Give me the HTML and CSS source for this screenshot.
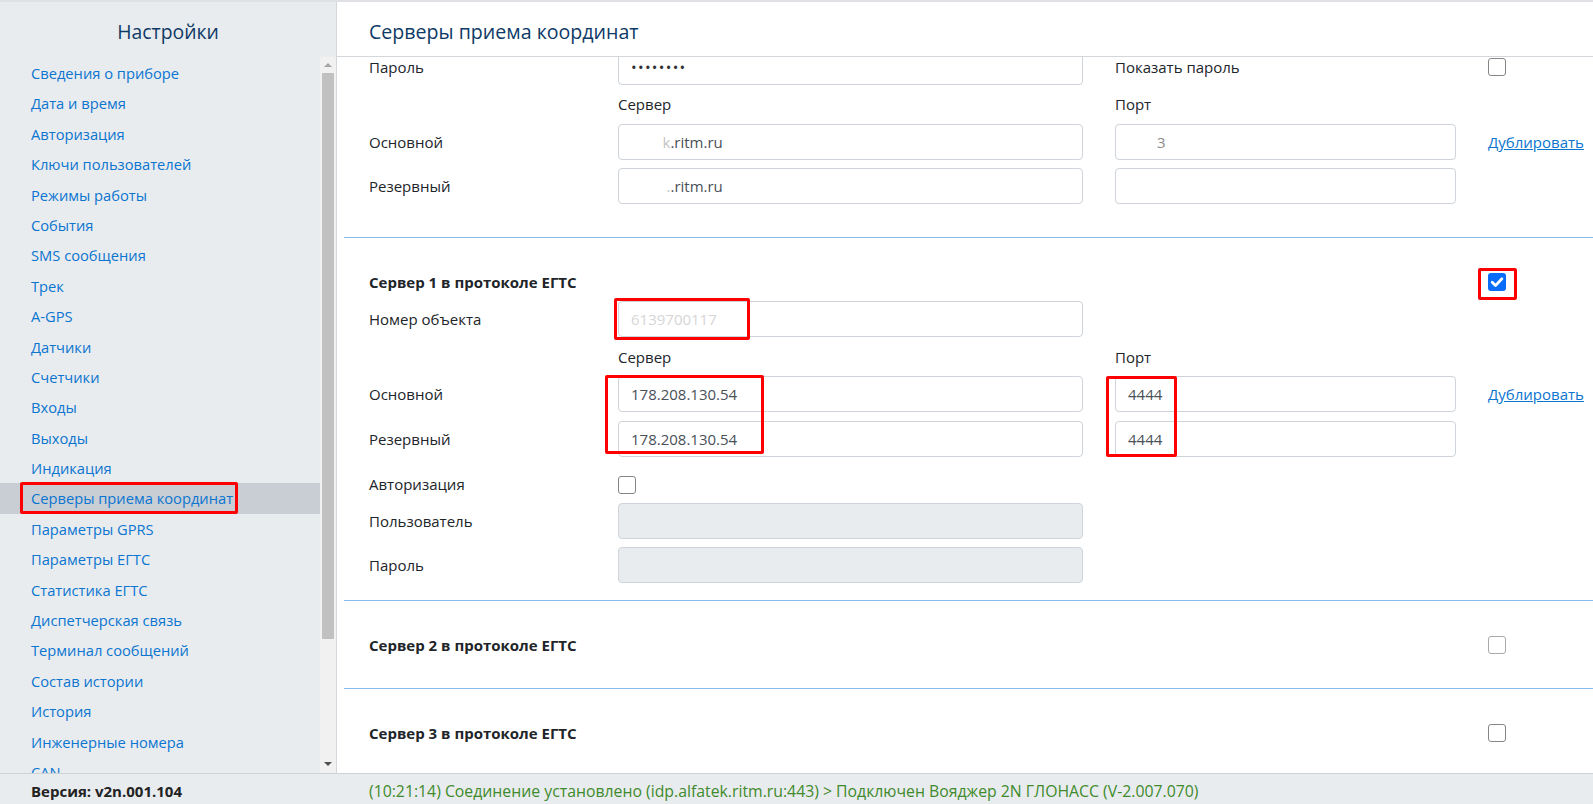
FILE: index.html
```html
<!DOCTYPE html>
<html lang="ru">
<head>
<meta charset="utf-8">
<title>Серверы приема координат</title>
<link rel="stylesheet" href="styles.css">
</head>
<body>
<div class="app">
  <div class="side-title">Настройки</div>
  <div class="main-title">Серверы приема координат</div>

  <div class="side-body">
    <ul class="nav">
      <li><a href="#">Сведения о приборе</a></li>
      <li><a href="#">Дата и время</a></li>
      <li><a href="#">Авторизация</a></li>
      <li><a href="#">Ключи пользователей</a></li>
      <li><a href="#">Режимы работы</a></li>
      <li><a href="#">События</a></li>
      <li><a href="#">SMS сообщения</a></li>
      <li><a href="#">Трек</a></li>
      <li><a href="#">A-GPS</a></li>
      <li><a href="#">Датчики</a></li>
      <li><a href="#">Счетчики</a></li>
      <li><a href="#">Входы</a></li>
      <li><a href="#">Выходы</a></li>
      <li><a href="#">Индикация</a></li>
      <li class="active"><a href="#">Серверы приема координат</a><span class="mark mark-nav"></span></li>
      <li><a href="#">Параметры GPRS</a></li>
      <li><a href="#">Параметры ЕГТС</a></li>
      <li><a href="#">Статистика ЕГТС</a></li>
      <li><a href="#">Диспетчерская связь</a></li>
      <li><a href="#">Терминал сообщений</a></li>
      <li><a href="#">Состав истории</a></li>
      <li><a href="#">История</a></li>
      <li><a href="#">Инженерные номера</a></li>
      <li><a href="#">CAN</a></li>
    </ul>
    <div class="scrollbar">
      <span class="sb-arrow sb-up"></span>
      <div class="sb-track"><div class="sb-thumb"></div></div>
      <span class="sb-arrow sb-down"></span>
    </div>
  </div>

  <div class="content">
    <div class="content-inner">
      <section class="sect sect-first">
        <div class="row">
          <div class="lbl">Пароль</div>
          <div class="inp pass">••••••••</div>
          <div class="lbl">Показать пароль</div>
          <div><span class="cb"></span></div>
        </div>
        <div class="row row-cap">
          <div></div>
          <div class="lbl">Сервер</div>
          <div class="lbl">Порт</div>
          <div></div>
        </div>
        <div class="row">
          <div class="lbl">Основной</div>
          <div class="inp masked-a"><span class="faint">k</span>.ritm.ru</div>
          <div class="inp masked-p"><span class="half">3</span></div>
          <div><a class="link" href="#">Дублировать</a></div>
        </div>
        <div class="row">
          <div class="lbl">Резервный</div>
          <div class="inp masked-b"><span class="faint">.</span>.ritm.ru</div>
          <div class="inp"></div>
          <div></div>
        </div>
      </section>

      <section class="sect sect-one">
        <div class="row row-head">
          <div class="head">Сервер 1 в протоколе ЕГТС</div>
          <div class="cb-cell"><span class="cb cb-on"><svg viewBox="0 0 18 18" width="18" height="18"><path d="M4.2 9.3l3.3 3.3 6.4-6.8" fill="none" stroke="#fff" stroke-width="2.8" stroke-linecap="round" stroke-linejoin="round"/></svg></span></div>
        </div>
        <div class="row">
          <div class="lbl">Номер объекта</div>
          <div class="inp masked-n">6139700117</div>
          <div></div>
          <div></div>
        </div>
        <div class="row row-cap">
          <div></div>
          <div class="lbl">Сервер</div>
          <div class="lbl">Порт</div>
          <div></div>
        </div>
        <div class="row">
          <div class="lbl">Основной</div>
          <div class="inp">178.208.130.54</div>
          <div class="inp">4444</div>
          <div><a class="link" href="#">Дублировать</a></div>
        </div>
        <div class="row">
          <div class="lbl">Резервный</div>
          <div class="inp">178.208.130.54</div>
          <div class="inp">4444</div>
          <div></div>
        </div>
        <div class="row row-check">
          <div class="lbl">Авторизация</div>
          <div><span class="cb"></span></div>
          <div></div>
          <div></div>
        </div>
        <div class="row">
          <div class="lbl">Пользователь</div>
          <div class="inp inp-off"></div>
          <div></div>
          <div></div>
        </div>
        <div class="row">
          <div class="lbl">Пароль</div>
          <div class="inp inp-off"></div>
          <div></div>
          <div></div>
        </div>
        <span class="mark mark-num"></span>
        <span class="mark mark-ip"></span>
        <span class="mark mark-port"></span>
        <span class="mark mark-cb"></span>
      </section>

      <section class="sect sect-short">
        <div class="row row-head">
          <div class="head">Сервер 2 в протоколе ЕГТС</div>
          <div class="cb-cell"><span class="cb cb-light"></span></div>
        </div>
      </section>

      <section class="sect sect-short">
        <div class="row row-head">
          <div class="head">Сервер 3 в протоколе ЕГТС</div>
          <div class="cb-cell"><span class="cb"></span></div>
        </div>
      </section>
    </div>
  </div>

  <div class="version">Версия: v2n.001.104</div>
  <div class="status">(10:21:14) Соединение установлено (idp.alfatek.ritm.ru:443) &gt; Подключен Вояджер 2N ГЛОНАСС (V-2.007.070)</div>
</div>
</body>
</html>
```

FILE: styles.css
```css
* { box-sizing: border-box; }

html, body {
  margin: 0;
  padding: 0;
  height: 100%;
}

body {
  font-family: "Open Sans", "Liberation Sans", sans-serif;
  font-size: 15px;
  color: #212529;
  background: #ffffff;
  overflow: hidden;
}

.app {
  display: grid;
  grid-template-columns: 337px 1fr;
  grid-template-rows: 55px 716px 31px;
  height: 804px;
  border-top: 2px solid #dfe1e4;
}

/* ---------- sidebar ---------- */
.side-title {
  background: #e9ecef;
  border-right: 1px solid #d3d7dc;
  display: flex;
  align-items: center;
  justify-content: center;
  padding-top: 4px;
  font-size: 19.4px;
  font-weight: 500;
  color: #0e3a66;
}

.side-body {
  background: #e9ecef;
  border-right: 1px solid #d3d7dc;
  display: flex;
  overflow: hidden;
}

.nav {
  list-style: none;
  margin: 0;
  padding: 1px 0 0;
  flex: 1;
  overflow: hidden;
  font-size: 14.7px;
}

.nav li {
  height: 30.4px;
  line-height: 30.4px;
  padding-left: 31px;
  white-space: nowrap;
}

.nav li a {
  color: #0b75d0;
  text-decoration: none;
}

.nav li.active {
  background: #c9ced5;
  position: relative;
}

.scrollbar {
  width: 16px;
  background: #f1f1f1;
  display: flex;
  flex-direction: column;
  align-items: center;
}

.sb-arrow {
  width: 0;
  height: 0;
  border-left: 4px solid transparent;
  border-right: 4px solid transparent;
}

.sb-up {
  margin-top: 6px;
  border-bottom: 4px solid #a3a3a3;
}

.sb-down {
  margin-top: auto;
  margin-bottom: 7px;
  border-top: 4px solid #505050;
}

.sb-track {
  width: 100%;
  padding: 0 2px;
  margin-top: 6px;
}

.sb-thumb {
  height: 566px;
  background: #c1c1c1;
}

.version {
  background: #e9ecef;
  border-top: 1px solid #cdd2d7;
  padding: 4px 0 0 31px;
  display: flex;
  align-items: center;
  font-weight: 700;
  font-size: 15px;
  color: #222;
}

/* ---------- main ---------- */
.main-title {
  border-bottom: 1px solid #d3d7dc;
  display: flex;
  align-items: center;
  padding: 4px 0 0 32px;
  font-size: 19.6px;
  font-weight: 500;
  color: #0e3a66;
}

.content {
  overflow: hidden;
}

.content-inner {
  margin-top: -8.5px;
  margin-left: 7px;
}

.sect {
  position: relative;
  padding-left: 25px;
  display: flex;
  flex-direction: column;
  gap: 8.5px;
}

.sect-first { padding-bottom: 32.5px; }

.sect-one {
  border-top: 1px solid #86bdec;
  padding-top: 33px;
  padding-bottom: 16.5px;
}

.sect-short {
  border-top: 1px solid #86bdec;
  padding-top: 33px;
  padding-bottom: 32px;
}

.row {
  display: grid;
  grid-template-columns: 217px 465px 341px 1fr;
  column-gap: 32px;
  align-items: center;
  min-height: 36px;
}

.row-cap { min-height: 22px; height: 22px; }
.row-head { min-height: 22px; height: 22px; }
.row-check {
  min-height: 29px;
  height: 29px;
  align-items: end;
}

.lbl {
  white-space: nowrap;
}

.row-check .lbl { line-height: 19px; }

.head {
  grid-column: 1 / 4;
  font-weight: 700;
  white-space: nowrap;
}

.cb-cell { grid-column: 4; }

.inp {
  height: 36px;
  border: 1px solid #ced4da;
  border-radius: 4px;
  background: #fff;
  padding: 0 12px;
  display: flex;
  align-items: center;
  color: #495057;
  white-space: nowrap;
}

.inp-off { background: #e9ecef; }

.pass {
  color: #333;
  letter-spacing: 1.3px;
}

.masked-a { padding-left: 43.5px; }
.masked-b { padding-left: 47.5px; }
.masked-p { padding-left: 41px; }
.masked-n { color: #d6d6d6; }

.faint { color: #c4c4c4; }
.half { color: #8a8a8a; }

.link {
  color: #0b75d0;
  text-decoration: underline;
  white-space: nowrap;
}

.cb {
  display: block;
  width: 18px;
  height: 18px;
  border: 1.5px solid #858585;
  border-radius: 3px;
  background: #fff;
}

.cb-light { border-color: #a9a9a9; }

.cb-on {
  border: none;
  background: #0a6dfa;
}

.cb-on svg { display: block; }

/* red annotation frames over the content */
.mark {
  position: absolute;
  border: 3px solid #ff0000;
  border-radius: 2px;
  pointer-events: none;
}

.mark-nav { left: 20px; top: -1px; width: 218px; height: 32px; }
.mark-num { left: 270px; top: 60px; width: 136px; height: 42px; }
.mark-ip { left: 261px; top: 137px; width: 159px; height: 79px; }
.mark-port { left: 762px; top: 138px; width: 71px; height: 81px; }
.mark-cb { left: 1134px; top: 30px; width: 39px; height: 32px; }

/* ---------- footer ---------- */
.status {
  background: #e9ecef;
  border-top: 1px solid #cdd2d7;
  padding: 4px 0 0 32px;
  display: flex;
  align-items: center;
  font-size: 15.8px;
  color: #3f8a2c;
  white-space: nowrap;
}
```
